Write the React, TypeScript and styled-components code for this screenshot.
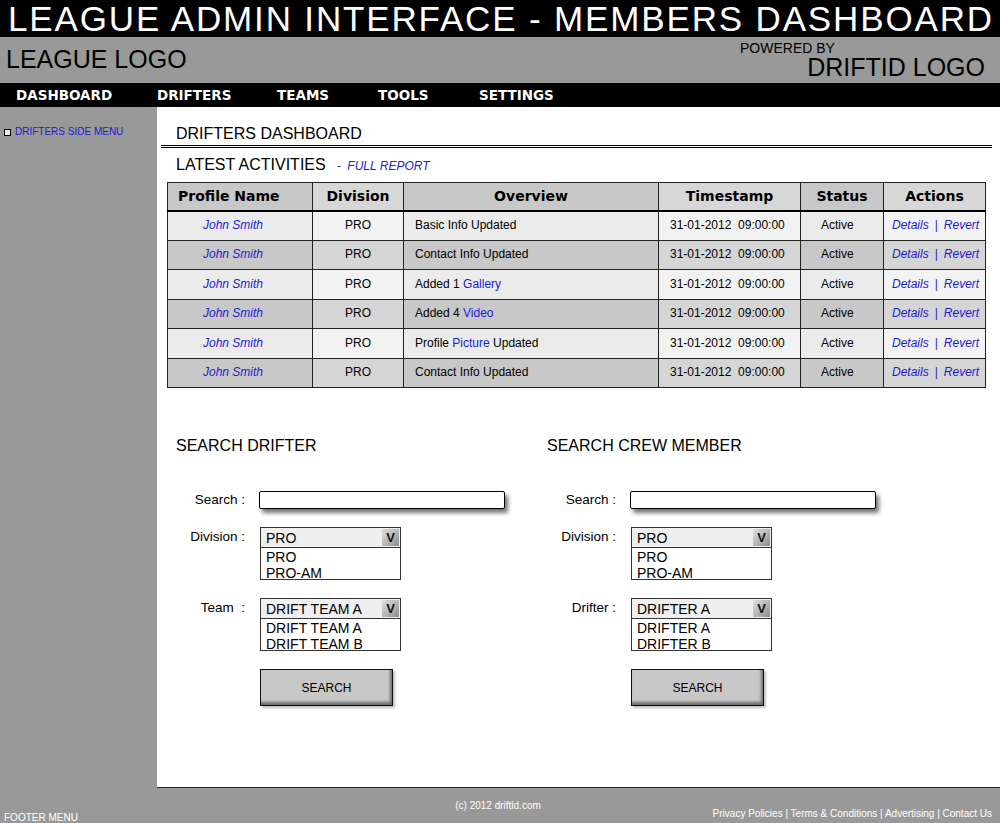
import React from "react";
import styled, { createGlobalStyle } from "styled-components";

const GlobalStyle = createGlobalStyle`
  html, body { margin: 0; padding: 0; background: #fff; }
  body { font-family: "Liberation Sans", Arial, sans-serif; color: #000; }
  * { box-sizing: border-box; }
`;

const BLUE = "#1c1cd0";

const Page = styled.div`
  width: 1000px;
  height: 823px;
  display: flex;
  flex-direction: column;
  overflow: hidden;
`;

const TitleBar = styled.h1`
  margin: 0;
  height: 37px;
  flex: none;
  background: #000;
  color: #fff;
  font-weight: normal;
  font-size: 35px;
  line-height: 37px;
  letter-spacing: 1.85px;
  padding-left: 8px;
  white-space: nowrap;
`;

const BrandBar = styled.div`
  height: 46px;
  flex: none;
  background: #999;
  display: flex;
  justify-content: space-between;
  padding: 0 15px 0 6px;
`;

const LeagueLogo = styled.div`
  font-size: 25px;
  line-height: 25px;
  padding-top: 10px;
`;

const Powered = styled.div`
  width: 245px;
  display: flex;
  flex-direction: column;
  padding-top: 4px;
`;

const PoweredBy = styled.div`
  font-size: 14px;
  line-height: 14px;
`;

const DriftidLogo = styled.div`
  font-size: 25px;
  line-height: 25px;
  text-align: right;
`;

const NavBar = styled.nav`
  height: 24px;
  flex: none;
  background: #000;
  display: grid;
  grid-template-columns: 141px 120px 101px 101px auto;
  padding-left: 16px;
`;

const NavItem = styled.a`
  color: #fff;
  font-family: "DejaVu Sans", sans-serif;
  font-weight: bold;
  font-size: 13.5px;
  line-height: 24px;
  text-decoration: none;
  white-space: nowrap;
`;

const Main = styled.div`
  flex: 1;
  display: flex;
  min-height: 0;
`;

const Sidebar = styled.aside`
  width: 157px;
  flex: none;
  background: #999;
  padding: 19px 0 0 4px;
`;

const SideItem = styled.a`
  display: flex;
  align-items: center;
  gap: 4px;
  color: ${BLUE};
  font-size: 10px;
  line-height: 12px;
  text-decoration: none;
`;

const CheckBox = styled.span`
  width: 7px;
  height: 7px;
  border: 1px solid #000;
  background: #eee;
  flex: none;
`;

const Content = styled.main`
  flex: 1;
  background: #fff;
  border-bottom: 1px solid #222;
  padding: 18px 8px 0 4px;
`;

const Heading = styled.h2`
  margin: 0;
  font-size: 16px;
  line-height: 18px;
  font-weight: normal;
  white-space: nowrap;
`;

const DashTitle = styled(Heading)`
  padding: 0 0 2px 15px;
  border-bottom: 3px double #000;
`;

const ActivitiesTitle = styled(Heading)`
  margin-top: 8px;
  padding-left: 15px;
`;

const FullReport = styled.a`
  font-size: 12px;
  font-style: italic;
  color: ${BLUE};
  margin-left: 11px;
  text-decoration: none;
`;

const Table = styled.table`
  margin: 7px 0 0 6px;
  width: 818px;
  border-collapse: collapse;
  table-layout: fixed;
  border: 1px solid #000;
`;

const HeadRow = styled.tr`
  & > th:nth-child(odd) { background: #c8c8c8; }
  & > th:nth-child(even) { background: #d7d7d7; }
`;

const Th = styled.th<{ $align?: string; $pad?: number }>`
  height: 28px;
  padding: 0 0 0 ${(p) => p.$pad ?? 0}px;
  font-family: "DejaVu Sans", sans-serif;
  font-weight: bold;
  font-size: 14px;
  text-align: ${(p) => p.$align ?? "center"};
  border: 1px solid #222;
  border-bottom: 2px solid #000;
  white-space: nowrap;
`;

const Row = styled.tr<{ $dark: boolean }>`
  & > td:nth-child(odd) { background: ${(p) => (p.$dark ? "#c8c8c8" : "#ebebeb")}; }
  & > td:nth-child(even) { background: ${(p) => (p.$dark ? "#d5d5d5" : "#f2f2f2")}; }
`;

const Td = styled.td<{ $align?: string; $pad?: number }>`
  height: 29.5px;
  padding: 0 0 1px ${(p) => p.$pad ?? 0}px;
  font-size: 12px;
  text-align: ${(p) => p.$align ?? "left"};
  border: 1px solid #222;
  white-space: nowrap;
`;

const LinkText = styled.a`
  color: ${BLUE};
  text-decoration: none;
`;

const ItalicLink = styled(LinkText)`
  font-style: italic;
`;

const Sep = styled.span`
  color: ${BLUE};
  margin: 0 6px;
`;

const SearchGrid = styled.div`
  display: grid;
  grid-template-columns: 371px 1fr;
  margin-top: 49px;
  padding-left: 15px;
`;

const Panel = styled.section`
  display: flex;
  flex-direction: column;
`;

const Form = styled.div`
  display: grid;
  grid-template-columns: 70px auto;
  column-gap: 13px;
  row-gap: 18px;
  margin-top: 36px;
  justify-content: start;
  align-items: start;
`;

const Label = styled.label<{ $lh: number }>`
  font-size: 13.5px;
  line-height: ${(p) => p.$lh}px;
  text-align: right;
  white-space: pre;
  margin-right: 1px;
`;

const TextInput = styled.input`
  width: 246px;
  height: 18px;
  border: 1px solid #000;
  border-radius: 2px;
  background: #fff;
  box-shadow: 3px 4px 4px rgba(0, 0, 0, 0.55);
  padding: 0 4px;
  outline: none;
`;

const SelectBox = styled.div`
  width: 141px;
  margin-left: 1px;
  border: 1px solid #333;
  background: #fff;
`;

const SelectHead = styled.div`
  height: 20px;
  background: #efefef;
  border-bottom: 1px solid #333;
  display: flex;
  align-items: center;
  justify-content: space-between;
  padding-left: 5px;
  font-size: 14px;
`;

const Arrow = styled.span`
  width: 17px;
  height: 17px;
  margin-right: 1px;
  background: linear-gradient(135deg, #e0e0e0 0%, #b4b4b4 55%, #8c8c8c 100%);
  display: flex;
  align-items: center;
  justify-content: center;
  font-weight: bold;
  font-size: 13px;
  color: #111;
`;

const SelectList = styled.div`
  height: 31px;
  padding: 1px 5px 0;
  font-size: 14px;
  line-height: 16px;
`;

const Button = styled.button`
  grid-column: 2;
  width: 133px;
  height: 37px;
  margin-left: 1px;
  border: 1px solid #111;
  background: #c8c8c8;
  font-family: "Liberation Sans", Arial, sans-serif;
  font-size: 12px;
  color: #000;
  box-shadow: inset -2px -3px 3px rgba(0, 0, 0, 0.45), 2px 2px 2px rgba(0, 0, 0, 0.25);
  padding: 0;
`;

const Footer = styled.footer`
  height: 35px;
  flex: none;
  background: #999;
  color: #fff;
  font-size: 10px;
  display: grid;
  grid-template-columns: 1fr auto 1fr;
  padding: 0 8px 0 4px;
`;

const FooterMenu = styled.div`
  align-self: end;
  line-height: 10px;
`;

const Copyright = styled.div`
  align-self: start;
  padding-top: 12px;
  line-height: 12px;
`;

const FooterLinks = styled.div`
  align-self: start;
  justify-self: end;
  padding-top: 20px;
  line-height: 12px;
  white-space: nowrap;
`;

type Activity = { overview: React.ReactNode };

const activities: Activity[] = [
  { overview: "Basic Info Updated" },
  { overview: "Contact Info Updated" },
  { overview: <>Added 1 <LinkText>Gallery</LinkText></> },
  { overview: <>Added 4 <LinkText>Video</LinkText></> },
  { overview: <>Profile <LinkText>Picture</LinkText> Updated</> },
  { overview: "Contact Info Updated" },
];

const Select = ({ value, options }: { value: string; options: string[] }) => (
  <SelectBox>
    <SelectHead>
      <span>{value}</span>
      <Arrow>V</Arrow>
    </SelectHead>
    <SelectList>
      {options.map((o) => (
        <div key={o}>{o}</div>
      ))}
    </SelectList>
  </SelectBox>
);

const SearchPanel = ({
  title,
  thirdLabel,
  thirdValue,
  thirdOptions,
}: {
  title: string;
  thirdLabel: string;
  thirdValue: string;
  thirdOptions: string[];
}) => (
  <Panel>
    <Heading>{title}</Heading>
    <Form>
      <Label $lh={18}>Search :</Label>
      <TextInput />
      <Label $lh={20}>Division :</Label>
      <Select value="PRO" options={["PRO", "PRO-AM"]} />
      <Label $lh={20}>{thirdLabel}</Label>
      <Select value={thirdValue} options={thirdOptions} />
      <Button>SEARCH</Button>
    </Form>
  </Panel>
);

export default function App() {
  return (
    <>
      <GlobalStyle />
      <Page>
        <TitleBar>LEAGUE ADMIN INTERFACE - MEMBERS DASHBOARD</TitleBar>
        <BrandBar>
          <LeagueLogo>LEAGUE LOGO</LeagueLogo>
          <Powered>
            <PoweredBy>POWERED BY</PoweredBy>
            <DriftidLogo>DRIFTID LOGO</DriftidLogo>
          </Powered>
        </BrandBar>
        <NavBar>
          <NavItem>DASHBOARD</NavItem>
          <NavItem>DRIFTERS</NavItem>
          <NavItem>TEAMS</NavItem>
          <NavItem>TOOLS</NavItem>
          <NavItem>SETTINGS</NavItem>
        </NavBar>
        <Main>
          <Sidebar>
            <SideItem>
              <CheckBox />
              DRIFTERS SIDE MENU
            </SideItem>
          </Sidebar>
          <Content>
            <DashTitle>DRIFTERS DASHBOARD</DashTitle>
            <ActivitiesTitle>
              LATEST ACTIVITIES
              <FullReport>- &nbsp;FULL REPORT</FullReport>
            </ActivitiesTitle>
            <Table>
              <colgroup>
                <col style={{ width: 145 }} />
                <col style={{ width: 91 }} />
                <col style={{ width: 255 }} />
                <col style={{ width: 142 }} />
                <col style={{ width: 83 }} />
                <col style={{ width: 102 }} />
              </colgroup>
              <thead>
                <HeadRow>
                  <Th $align="left" $pad={10}>Profile Name</Th>
                  <Th>Division</Th>
                  <Th>Overview</Th>
                  <Th>Timestamp</Th>
                  <Th>Status</Th>
                  <Th>Actions</Th>
                </HeadRow>
              </thead>
              <tbody>
                {activities.map((a, i) => (
                  <Row key={i} $dark={i % 2 === 1}>
                    <Td $pad={35}>
                      <ItalicLink>John Smith</ItalicLink>
                    </Td>
                    <Td $align="center">PRO</Td>
                    <Td $pad={11}>{a.overview}</Td>
                    <Td $pad={11}>31-01-2012&nbsp; 09:00:00</Td>
                    <Td $pad={20}>Active</Td>
                    <Td $pad={8}>
                      <ItalicLink>Details</ItalicLink>
                      <Sep>|</Sep>
                      <ItalicLink>Revert</ItalicLink>
                    </Td>
                  </Row>
                ))}
              </tbody>
            </Table>
            <SearchGrid>
              <SearchPanel
                title="SEARCH DRIFTER"
                thirdLabel={"Team  :"}
                thirdValue="DRIFT TEAM A"
                thirdOptions={["DRIFT TEAM A", "DRIFT TEAM B"]}
              />
              <SearchPanel
                title="SEARCH CREW MEMBER"
                thirdLabel="Drifter :"
                thirdValue="DRIFTER A"
                thirdOptions={["DRIFTER A", "DRIFTER B"]}
              />
            </SearchGrid>
          </Content>
        </Main>
        <Footer>
          <FooterMenu>FOOTER MENU</FooterMenu>
          <Copyright>(c) 2012 driftld.com</Copyright>
          <FooterLinks>
            Privacy Policies | Terms &amp; Conditions | Advertising | Contact Us
          </FooterLinks>
        </Footer>
      </Page>
    </>
  );
}
